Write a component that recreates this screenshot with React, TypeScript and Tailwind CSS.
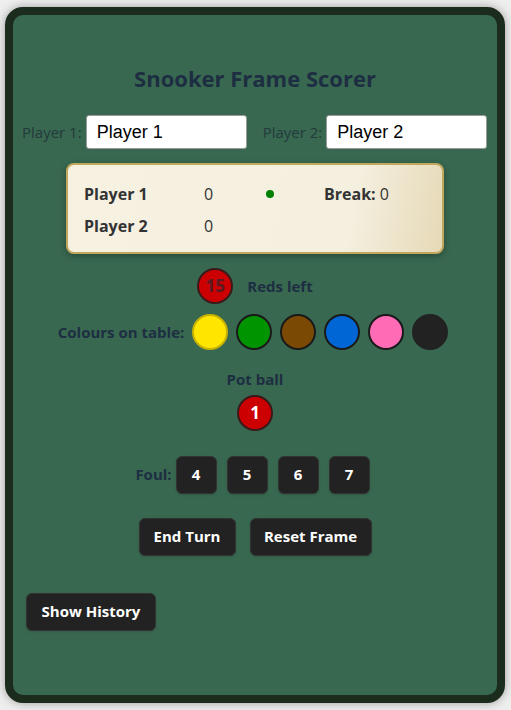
const colours = [
  { name: "yellow", bg: "bg-[#ffe600]", border: "border-[#c9b300]" },
  { name: "green", bg: "bg-[#009400]", border: "border-[#1a1a1a]" },
  { name: "brown", bg: "bg-[#7a4a05]", border: "border-[#1a1a1a]" },
  { name: "blue", bg: "bg-[#0066d6]", border: "border-[#1a1a1a]" },
  { name: "pink", bg: "bg-[#ff6bb5]", border: "border-[#1a1a1a]" },
  { name: "black", bg: "bg-[#222222]", border: "border-[#222222]" },
];

const btn =
  "rounded-md bg-[#222222] text-white font-bold text-[15px] shadow-sm border border-[#333]";

const inputCls =
  "w-[161px] h-[34px] shrink-0 rounded-[3px] border border-[#999] bg-white px-[10px] text-[18px] text-black font-['Liberation_Sans',sans-serif] outline-none";

export default function App() {
  return (
    <div className="min-h-[710px] bg-[#eeeeee] pt-[7px] pl-[5px] font-['Open_Sans',sans-serif]">
      <div className="w-[500px] h-[696px] rounded-[18px] border-8 border-[#1b2b1c] bg-[#386850] shadow-[0_0_10px_rgba(0,0,0,0.35)] flex flex-col px-[10px]">
        <h1 className="mt-[48px] text-center text-[22px] font-bold text-[#1e2e42] leading-[30px]">
          Snooker Frame Scorer
        </h1>

        <div className="mt-[22px] flex items-center gap-[16px] -ml-[1px] whitespace-nowrap">
          <label className="flex items-center gap-[4px] text-[15px] text-[#243a3c]">
            Player 1:
            <input defaultValue="Player 1" className={inputCls} />
          </label>
          <label className="flex items-center gap-[4px] text-[15px] text-[#243a3c]">
            Player 2:
            <input defaultValue="Player 2" className={inputCls} />
          </label>
        </div>

        <div className="mt-[14px] mx-auto w-[378px] h-[91px] rounded-[8px] border-2 border-[#c2a85c] bg-[linear-gradient(100deg,#f6f1e1_0%,#f4efdf_75%,#e6d9b7_100%)] shadow-[0_2px_6px_rgba(0,0,0,0.3)] pl-[16px] pr-[17px] py-[13px] text-[16px] text-[#333]">
          <div className="flex items-center h-[32px]">
            <span className="w-[120px] font-bold">Player 1</span>
            <span className="w-[62px]">0</span>
            <span className="w-[58px] flex">
              <span className="w-[8px] h-[8px] rounded-full bg-[#008000]" />
            </span>
            <span>
              <b>Break:</b> 0
            </span>
          </div>
          <div className="flex items-center h-[32px]">
            <span className="w-[120px] font-bold">Player 2</span>
            <span className="w-[62px]">0</span>
          </div>
        </div>

        <div className="mt-[14px] flex items-center justify-center gap-[14px]">
          <div className="w-[36px] h-[36px] rounded-full bg-[#cc0000] border-2 border-[#3a1a1a] flex items-center justify-center text-[17px] font-bold text-[#5a1a22]">
            15
          </div>
          <span className="text-[15px] font-bold text-[#1e2e42]">Reds left</span>
        </div>

        <div className="mt-[10px] flex items-center justify-center gap-[8px] pr-[4px]">
          <span className="text-[15px] font-bold text-[#1e2e42]">Colours on table:</span>
          {colours.map((c) => (
            <div
              key={c.name}
              className={`w-[36px] h-[36px] rounded-full border-2 ${c.bg} ${c.border}`}
            />
          ))}
        </div>

        <div className="mt-[18px] text-center text-[15px] font-bold text-[#1e2e42]">
          Pot ball
        </div>
        <div className="mt-[4px] flex justify-center">
          <div className="w-[36px] h-[36px] rounded-full bg-[#cc0000] border-2 border-[#3a1a1a] flex items-center justify-center text-[17px] font-bold text-white">
            1
          </div>
        </div>

        <div className="mt-[25px] flex items-center justify-center gap-[10px] pr-[5px]">
          <span className="text-[15px] font-bold text-[#1e2e42] mr-[-6px]">Foul:</span>
          {[4, 5, 6, 7].map((n) => (
            <button key={n} className={`${btn} w-[41px] h-[38px]`}>
              {n}
            </button>
          ))}
        </div>

        <div className="mt-[24px] flex items-center justify-center gap-[14px]">
          <button className={`${btn} w-[97px] h-[38px]`}>End Turn</button>
          <button className={`${btn} w-[122px] h-[38px]`}>Reset Frame</button>
        </div>

        <div className="mt-[37px] pl-[3px]">
          <button className={`${btn} w-[130px] h-[38px]`}>Show History</button>
        </div>
      </div>
    </div>
  );
}
